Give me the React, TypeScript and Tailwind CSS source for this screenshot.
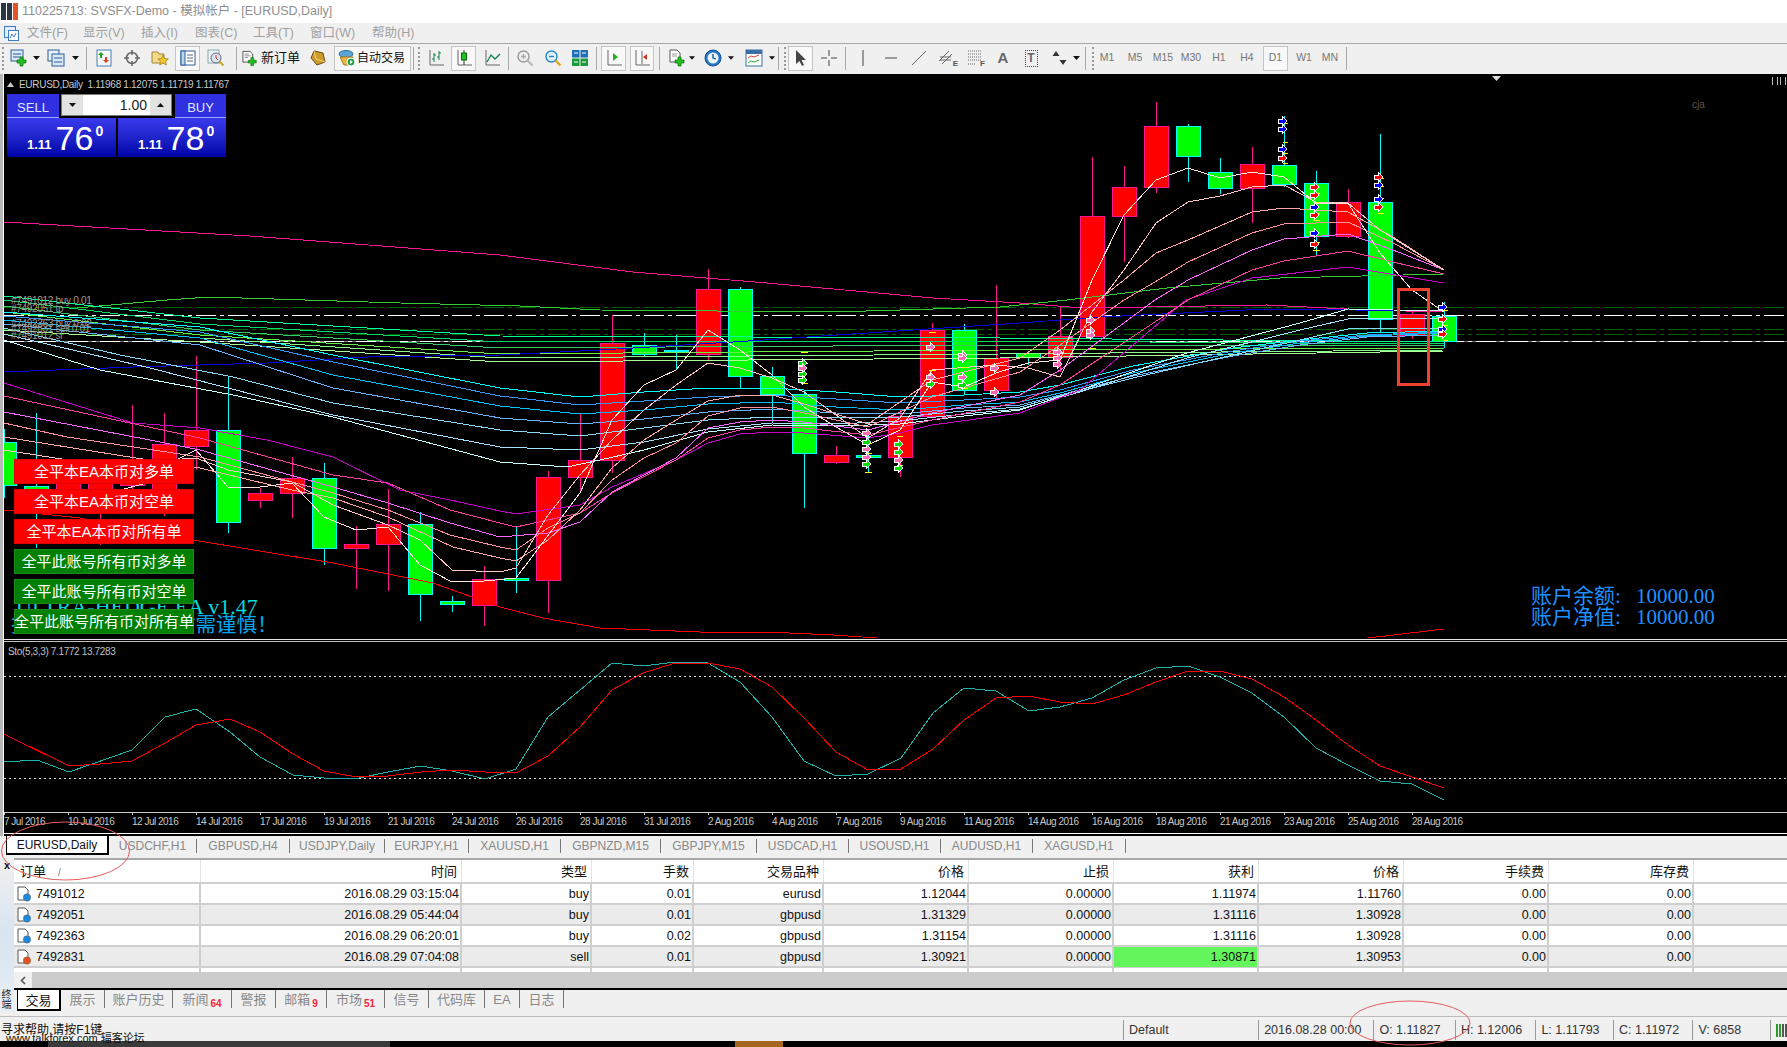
import type { ReactNode } from 'react';

const UI = "font-['Liberation_Sans','Noto_Sans_CJK_SC',sans-serif]";

// x, high, body top, body bottom, low, colour. page coordinates
const candles: [number, number, number, number, number, 'g' | 'r'][] = [
  [4, 429, 442, 485, 498, 'g'], [36, 413, 486, 505, 548, 'g'], [68, 470, 475, 500, 510, 'r'],
  [100, 462, 480, 500, 545, 'r'], [132, 405, 465, 485, 505, 'r'], [164, 413, 444, 512, 516, 'r'],
  [196, 356, 430, 446, 470, 'r'], [228, 377, 430, 522, 533, 'g'], [260, 488, 493, 500, 508, 'r'],
  [292, 457, 478, 493, 518, 'r'], [324, 463, 478, 548, 565, 'g'], [356, 526, 544, 548, 589, 'r'],
  [388, 489, 524, 544, 591, 'r'], [420, 512, 524, 594, 621, 'g'], [452, 596, 601, 604, 612, 'g'],
  [484, 566, 579, 605, 626, 'r'], [516, 527, 578, 580, 593, 'g'], [548, 471, 477, 580, 613, 'r'],
  [580, 413, 460, 477, 491, 'r'], [612, 315, 343, 460, 473, 'r'], [644, 333, 345, 354, 356, 'g'],
  [676, 335, 350, 351, 370, 'g'], [708, 269, 289, 354, 361, 'r'], [740, 287, 289, 376, 388, 'g'],
  [772, 367, 376, 394, 422, 'g'], [804, 390, 394, 453, 508, 'g'], [836, 446, 455, 462, 464, 'r'],
  [868, 430, 455, 457, 473, 'g'], [900, 410, 416, 457, 477, 'r'], [932, 323, 330, 416, 417, 'r'],
  [964, 324, 330, 390, 395, 'g'], [996, 285, 358, 390, 398, 'r'], [1028, 351, 353, 357, 365, 'g'],
  [1060, 307, 336, 357, 372, 'r'], [1092, 157, 216, 336, 338, 'r'], [1124, 166, 187, 216, 262, 'r'],
  [1156, 102, 126, 187, 193, 'r'], [1188, 124, 126, 156, 182, 'g'], [1220, 158, 172, 188, 194, 'g'],
  [1252, 147, 164, 188, 223, 'r'], [1284, 116, 165, 184, 187, 'g'], [1316, 171, 183, 236, 256, 'g'],
  [1348, 189, 202, 236, 238, 'r'], [1380, 134, 202, 319, 333, 'g'], [1412, 310, 314, 335, 339, 'r'],
  [1444, 302, 316, 341, 348, 'g'],
];

const lines: [string, string][] = [
  ['#ff1493', '4,222 250,236 500,255 633,272 767,283 933,298 1020,303 1083,308 1267,305 1367,310 1444,312'],
  ['#ff0000', '4,510 80,518 193,540 333,563 433,583 500,607 543,618 600,628 700,632 767,632 833,635 877,638'],
  ['#ff0000', '1368,638 1444,629'],
  ['#33cc33', '77,308 167,300 210,297 400,303 520,306 600,310 833,312 1000,307 1067,300 1167,288 1280,278 1444,274'],
  ['#00ff99', '4,296 200,318 500,336 1000,338 1444,342'],
  ['#00dd66', '4,300 200,324 500,342 1000,341 1444,344'],
  ['#33cc66', '4,306 200,330 500,348 1000,345 1444,346'],
  ['#66ee44', '4,312 200,335 500,354 1000,350 1444,348'],
  ['#88ff88', '4,320 200,338 500,358 1000,354 1444,350'],
  ['#aaff99', '4,330 200,342 500,362 1000,358 1444,351'],
  ['#0000dd', '4,372 133,367 267,363 367,357 500,355 600,350 733,342 867,333 1020,323 1100,317 1267,309 1444,311'],
  ['#00ffff', '4,312 200,327 333,355 500,388 580,397 644,392 708,388 772,388 836,392 900,397 964,395 1020,392 1060,385 1133,366 1233,348 1300,340 1367,333 1444,331'],
  ['#3399ff', '4,316 200,332 333,362 500,396 580,405 644,401 708,397 772,395 836,399 900,403 964,400 1020,397 1060,390 1133,370 1233,351 1300,341 1367,335 1444,332'],
  ['#00bfff', '4,320 200,338 333,375 500,406 580,414 644,410 708,404 772,402 836,407 900,410 964,405 1020,402 1060,393 1133,373 1233,353 1300,343 1367,336 1444,333'],
  ['#66b3ff', '4,324 200,345 333,388 500,418 580,424 644,419 708,412 772,409 836,413 900,414 964,408 1020,405 1060,395 1133,376 1233,356 1300,345 1367,337 1444,335'],
  ['#88d8f8', '4,328 120,355 233,377 333,403 500,430 580,436 644,428 708,420 772,417 836,418 900,417 964,411 1020,407 1060,396 1133,378 1233,355 1300,340 1348,329 1444,328'],
  ['#a8e0ff', '4,334 150,368 333,415 500,447 580,450 644,442 708,429 772,423 836,424 900,421 964,414 1020,409 1080,392 1187,358 1300,330 1348,319 1444,318'],
  ['#c8ffff', '4,340 100,370 233,395 333,417 500,462 567,467 600,460 644,450 708,432 772,425 836,426 900,424 964,416 1020,410 1080,390 1187,353 1300,323 1348,309 1393,310 1444,311'],
  ['#cc00cc', '4,383 133,423 200,428 267,440 333,457 400,490 450,500 500,511 516,514 580,505 612,487 676,460 708,443 740,434 772,432 804,433 868,438 900,433 932,425 1020,413 1080,390 1186,300 1252,278 1348,267 1444,283'],
  ['#ff3fa0', '4,396 200,438 333,475 388,483 450,510 500,523 516,527 580,513 612,493 676,460 708,438 740,430 772,427 804,428 868,435 932,420 1020,402 1060,385 1188,300 1252,270 1284,261 1348,251 1393,262 1444,274'],
  ['#ff66ff', '4,412 150,440 200,450 333,487 388,503 450,523 500,537 548,533 580,522 612,492 676,458 708,428 740,422 772,420 804,422 868,430 932,413 1020,395 1060,370 1155,300 1188,280 1252,250 1284,239 1348,234 1393,250 1444,270'],
  ['#ff8f9f', '4,423 67,437 200,457 333,493 388,510 450,535 500,547 516,550 548,528 580,513 612,480 644,458 676,443 708,416 740,408 772,407 804,413 868,427 932,397 1020,372 1060,345 1124,300 1155,282 1188,262 1252,233 1284,224 1348,222 1393,243 1444,270'],
  ['#ffa8a8', '4,437 117,455 200,468 292,490 333,498 388,517 453,547 500,558 516,561 548,540 580,510 612,468 644,440 676,420 708,401 740,395 772,395 804,404 868,424 932,380 1020,358 1060,330 1124,280 1156,253 1188,240 1252,212 1284,208 1348,212 1393,237 1444,270'],
  ['#ffc4c4', '4,450 100,465 196,458 228,470 292,482 333,505 388,525 420,540 452,570 500,572 516,568 548,515 580,475 612,440 644,410 676,385 708,363 740,368 772,378 804,392 868,438 900,418 932,370 996,365 1028,368 1060,377 1092,312 1124,270 1156,223 1188,202 1220,196 1252,187 1284,185 1316,202 1348,203 1380,230 1412,250 1444,270'],
  ['#ffe4dc', '120,490 143,484 180,458 196,450 228,487 260,487 292,483 324,517 356,530 388,527 420,565 452,582 484,581 516,578 580,493 612,420 644,385 676,370 708,330 740,350 772,375 804,407 836,427 868,445 900,430 932,382 964,387 996,373 1028,363 1060,360 1092,280 1124,215 1156,180 1188,168 1220,178 1252,172 1284,177 1316,203 1348,203 1380,253 1412,290 1444,312'],
];

const markers: [number, number, string][] = [
  ...[[1282, 121], [1282, 129], [1282, 149], [1314, 207], [1314, 233], [1378, 185], [1378, 199], [1442, 307], [1442, 329]].map(([x, y]): [number, number, string] => [x, y, '#0000ff']),
  ...[[1282, 158], [1314, 187], [1314, 195], [1314, 215], [1314, 244], [1378, 177], [1378, 207], [1442, 319], [1442, 334]].map(([x, y]): [number, number, string] => [x, y, '#ff0000']),
  ...[[802, 363], [802, 374], [802, 380], [866, 442], [866, 464], [898, 444], [898, 452], [898, 468], [930, 384], [962, 385]].map(([x, y]): [number, number, string] => [x, y, '#00dd00']),
  ...[[1090, 320], [1090, 331], [1090, 335], [1057, 352], [1057, 358], [1057, 364], [802, 368], [866, 433], [866, 449], [866, 457], [898, 460], [930, 347], [930, 377], [962, 355], [962, 358], [962, 377], [994, 368], [994, 392]].map(([x, y]): [number, number, string] => [x, y, '#ff69b4']),
];

const ticks: [number, number, number][] = [
  [1283, 1288, 123], [1283, 1288, 142], [1283, 1288, 153], [1283, 1288, 163],
  [1313, 1320, 193], [1313, 1320, 202], [1313, 1320, 213], [1313, 1320, 220], [1313, 1320, 242], [1313, 1320, 250],
  [1378, 1384, 178], [1378, 1384, 186], [1378, 1384, 198], [1378, 1384, 213],
  [1443, 1448, 310], [1443, 1448, 325], [1443, 1448, 340], [1089, 1096, 348],
  [801, 808, 352], [801, 808, 363], [801, 808, 383], [865, 872, 443], [865, 872, 453], [865, 872, 472],
  [897, 903, 436], [897, 903, 452], [897, 903, 465], [929, 936, 332], [929, 936, 370], [929, 936, 377],
  [961, 968, 367], [961, 968, 388],
];

const stoMain = '4,762 37,760 69,772 132,750 165,717 196,709 230,732 260,757 293,775 324,778 359,778 388,772 421,766 452,771 485,779 516,769 548,717 580,690 612,663 643,666 675,662 692,662 708,663 740,682 772,717 804,761 836,776 868,774 901,758 933,713 964,688 996,691 1029,711 1060,707 1092,698 1124,680 1156,668 1188,666 1220,677 1252,693 1284,717 1316,748 1348,765 1380,781 1412,784 1444,800';
const stoSignal = '4,734 69,766 100,764 132,761 165,743 196,725 230,719 260,732 293,754 324,771 356,777 388,776 421,772 452,770 485,772 516,773 548,756 580,727 612,690 643,673 675,663 708,663 740,669 772,687 804,718 836,752 868,770 901,769 933,749 964,720 996,698 1029,696 1060,702 1092,704 1124,695 1156,682 1188,671 1220,671 1252,679 1284,697 1316,720 1348,745 1380,766 1412,777 1444,788';

const dates = ['7 Jul 2016', '10 Jul 2016', '12 Jul 2016', '14 Jul 2016', '17 Jul 2016', '19 Jul 2016', '21 Jul 2016', '24 Jul 2016', '26 Jul 2016', '28 Jul 2016', '31 Jul 2016', '2 Aug 2016', '4 Aug 2016', '7 Aug 2016', '9 Aug 2016', '11 Aug 2016', '14 Aug 2016', '16 Aug 2016', '18 Aug 2016', '21 Aug 2016', '23 Aug 2016', '25 Aug 2016', '28 Aug 2016'];

const chartTabs: [string, string][] = [
  ['USDCHF,H1', 'w-[88px]'], ['GBPUSD,H4', 'w-[93px]'], ['USDJPY,Daily', 'w-[95px]'], ['EURJPY,H1', 'w-[84px]'],
  ['XAUUSD,H1', 'w-[92px]'], ['GBPNZD,M15', 'w-[100px]'], ['GBPJPY,M15', 'w-[96px]'], ['USDCAD,H1', 'w-[92px]'],
  ['USOUSD,H1', 'w-[92px]'], ['AUDUSD,H1', 'w-[92px]'], ['XAGUSD,H1', 'w-[93px]'],
];

const termTabs: [string, string, string?][] = [
  ['展示', 'w-[44px]'], ['账户历史', 'w-[68px]'], ['新闻', 'w-[59px]', '64'], ['警报', 'w-[44px]'], ['邮箱', 'w-[51px]', '9'],
  ['市场', 'w-[58px]', '51'], ['信号', 'w-[44px]'], ['代码库', 'w-[56px]'], ['EA', 'w-[35px]'], ['日志', 'w-[44px]'],
];

const cols = 'grid grid-cols-[187px_261px_130px_102px_130px_145px_145px_145px_145px_145px_145px_1fr]';
const headers = ['时间', '类型', '手数', '交易品种', '价格', '止损', '获利', '价格', '手续费', '库存费'];
const orders = [
  ['7491012', '2016.08.29 03:15:04', 'buy', '0.01', 'eurusd', '1.12044', '0.00000', '1.11974', '1.11760', '0.00', '0.00'],
  ['7492051', '2016.08.29 05:44:04', 'buy', '0.01', 'gbpusd', '1.31329', '0.00000', '1.31116', '1.30928', '0.00', '0.00'],
  ['7492363', '2016.08.29 06:20:01', 'buy', '0.02', 'gbpusd', '1.31154', '0.00000', '1.31116', '1.30928', '0.00', '0.00'],
  ['7492831', '2016.08.29 07:04:08', 'sell', '0.01', 'gbpusd', '1.30921', '0.00000', '1.30871', '1.30953', '0.00', '0.00'],
];

const statusCells: [string, string][] = [
  ['Default', 'w-[136px]'], ['2016.08.28 00:00', 'w-[116px]'], ['O: 1.11827', 'w-[82px]'], ['H: 1.12006', 'w-[81px]'],
  ['L: 1.11793', 'w-[78px]'], ['C: 1.11972', 'w-[80px]'], ['V: 6858', 'w-[78px]'],
];

const closeButtons: [string, string][] = [
  ['全平本EA本币对多单', 'r'], ['全平本EA本币对空单', 'r'], ['全平本EA本币对所有单', 'r'],
  ['全平此账号所有币对多单', 'g'], ['全平此账号所有币对空单', 'g'], ['全平此账号所有币对所有单', 'g'],
];

function Tool({ w, on, children }: { w: string; on?: boolean; children?: ReactNode }) {
  return (
    <div className={`flex h-[25px] shrink-0 items-center justify-center ${w} ${on ? 'border border-[#c4c4c4] bg-[#f8f8f8]' : ''}`}>
      {children}
    </div>
  );
}

const Sep = ({ w }: { w: string }) => (
  <div className={`flex h-[25px] shrink-0 items-center justify-center ${w}`}>
    <div className="h-[23px] w-px bg-[#a8a8a8]" />
  </div>
);

const Grip = () => <div className="ml-[2px] h-[23px] w-[2px] shrink-0 border-l-2 border-dotted border-[#999]" />;

const Drop = () => (
  <svg width="7" height="4" viewBox="0 0 7 4"><path d="M0 0h7L3.5 4z" fill="#111" /></svg>
);

const Ic = ({ children, s = 18 }: { children: ReactNode; s?: number }) => (
  <svg width={s} height={s} viewBox="0 0 18 18">{children}</svg>
);

const Plus = () => <path d="M8 8h3V5h3v3h3v3h-3v3h-3v-3H8z" transform="translate(-1 3)" fill="#22c022" stroke="#0a6a0a" strokeWidth=".7" />;

const AxisBars = ({ c = '#333' }: { c?: string }) => (
  <>
    <path d="M3 1v15h14" fill="none" stroke="#666" />
    <path d="M7 4v9M5 10h2M7 6h2M12 2v9M10 8h2M12 4h2" fill="none" stroke={c} />
  </>
);

function Toolbar() {
  return (
    <div className="flex h-[31px] shrink-0 items-start border-t border-[#a8a8a8] bg-[#f0f0f0] pt-[1px]">
      <div className="flex h-[26px] items-center border-b-0">
        <Grip />
        <div className="w-[3px] shrink-0" />
        <Tool w="w-[23px]"><Ic><rect x="1" y="1" width="12" height="11" fill="#d9e8f6" stroke="#2b5f94" /><path d="M3 5h8M3 8h8" stroke="#2b5f94" /><Plus /></Ic></Tool>
        <Tool w="w-[12px]"><Drop /></Tool>
        <Tool w="w-[28px]"><Ic><rect x="1" y="1" width="11" height="11" fill="#e8f0fa" stroke="#2b5f94" /><rect x="5" y="5" width="12" height="12" fill="#d9e8f6" stroke="#2b5f94" /><path d="M7 9h8M7 13h8" stroke="#2b5f94" /></Ic></Tool>
        <Tool w="w-[11px]"><Drop /></Tool>
        <Sep w="w-[10px]" />
        <Tool w="w-[25px]"><Ic><rect x="2" y="1" width="14" height="16" fill="#f4f8fc" stroke="#4a7fb0" /><path d="M6 3l3 3H7v3H5V6H3z" fill="#1fa51f" /><path d="M11 14l-3-3h2V8h2v3h2z" fill="#e2401a" /></Ic></Tool>
        <Tool w="w-[32px]"><Ic><circle cx="9" cy="9" r="5.5" fill="none" stroke="#666" strokeWidth="1.5" /><path d="M9 1v5M9 12v5M1 9h5M12 9h5" stroke="#666" strokeWidth="1.5" /></Ic></Tool>
        <Tool w="w-[24px]"><Ic><path d="M1 3h6l1 2h5v9H1z" fill="#f3d98a" stroke="#a8873a" /><path d="M12 6l1.7 3.5 3.6.4-2.7 2.5.8 3.6-3.4-1.9-3.3 1.9.7-3.6L7 9.9l3.6-.4z" fill="#f0c52d" stroke="#9a7a14" strokeWidth=".7" /></Ic></Tool>
        <div className="w-[3px] shrink-0" />
        <Tool w="w-[25px]" on><Ic><rect x="2" y="2" width="14" height="14" fill="#fff" stroke="#2b5f94" /><rect x="2" y="2" width="4" height="14" fill="#bcd6ee" stroke="#2b5f94" /><path d="M8 6h6M8 9h6M8 12h6" stroke="#567" /></Ic></Tool>
        <Tool w="w-[32px]"><Ic><rect x="1" y="1" width="11" height="13" fill="#eef3f8" stroke="#8aa" /><circle cx="9" cy="9" r="5" fill="#d8e4ee" stroke="#667" /><path d="M9 6v3l2 2" stroke="#c33" fill="none" /><path d="M12.5 12.5l4 4" stroke="#c9a227" strokeWidth="2" /></Ic></Tool>
        <Sep w="w-[8px]" />
        <div className="flex h-[25px] w-[60px] shrink-0 items-center gap-[3px] pl-[2px]">
          <Ic s={17}><path d="M1 1h8l3 3v9H1z" fill="#fff" stroke="#444" /><path d="M3 4h5M3 6h7M3 8h4" stroke="#888" /><Plus /></Ic>
          <span className="text-[13px] whitespace-nowrap text-[#111]">新订单</span>
        </div>
        <div className="w-[5px] shrink-0" />
        <Tool w="w-[26px]"><Ic><path d="M5 2l9 2 2 9-8 3-6-7z" fill="#cf9a2c" stroke="#6b4a10" /><path d="M5 2l2 8 9 3" fill="none" stroke="#f0d37a" /></Ic></Tool>
        <div className="w-[3px] shrink-0" />
        <div className="flex h-[25px] w-[77px] shrink-0 items-center gap-[1px] border border-[#c4c4c4] bg-[#f8f8f8] pl-[3px]">
          <Ic><ellipse cx="8" cy="5" rx="7" ry="3.5" fill="#5ba4d6" stroke="#2b6f9e" /><path d="M2 8l4 8h6l3-8z" fill="#e9b84a" stroke="#a07a20" /><circle cx="13" cy="13" r="4" fill="#16a34a" stroke="#fff" /><path d="M12 11l3 2-3 2z" fill="#fff" /></Ic>
          <span className="text-[12px] whitespace-nowrap text-[#111]">自动交易</span>
        </div>
        <Sep w="w-[5px]" />
        <Grip />
        <div className="w-[3px] shrink-0" />
        <Tool w="w-[26px]"><Ic><AxisBars c="#14804a" /></Ic></Tool>
        <div className="w-[2px] shrink-0" />
        <Tool w="w-[25px]" on><Ic><path d="M3 1v15h14" fill="none" stroke="#666" /><path d="M9 1v15" stroke="#333" /><rect x="6.5" y="4" width="5" height="7" fill="#22c022" stroke="#0a6a0a" /></Ic></Tool>
        <Tool w="w-[31px]"><Ic><path d="M3 1v15h14" fill="none" stroke="#666" /><path d="M4 13l4-7 4 4 5-5" fill="none" stroke="#14804a" strokeWidth="1.3" /></Ic></Tool>
        <Sep w="w-[3px]" />
        <Tool w="w-[29px]"><Ic><circle cx="7.5" cy="7.5" r="5.5" fill="#eee" stroke="#999" strokeWidth="1.4" /><path d="M5 7.5h5M7.5 5v5" stroke="#aaa" strokeWidth="1.4" /><path d="M11.5 11.5l5 5" stroke="#bbb" strokeWidth="2.4" /></Ic></Tool>
        <Tool w="w-[27px]"><Ic><circle cx="7.5" cy="7.5" r="5.5" fill="#dff1fb" stroke="#2a86c4" strokeWidth="1.4" /><path d="M5 7.5h5" stroke="#2a86c4" strokeWidth="1.4" /><path d="M11.5 11.5l5 5" stroke="#d9a81f" strokeWidth="2.4" /></Ic></Tool>
        <Tool w="w-[27px]"><Ic><rect x="1" y="1" width="7.5" height="7.5" fill="#1d6fb8" /><rect x="9.5" y="1" width="7.5" height="7.5" fill="#1d6fb8" /><rect x="1" y="9.5" width="7.5" height="7.5" fill="#1c9c3a" /><rect x="9.5" y="9.5" width="7.5" height="7.5" fill="#1c9c3a" /><path d="M3 4h4M11 4h4M3 13h4M11 13h4" stroke="#fff" /></Ic></Tool>
        <Sep w="w-[6px]" />
        <div className="w-[2px] shrink-0" />
        <Tool w="w-[25px]" on><Ic><path d="M3 1v15h14" fill="none" stroke="#666" /><path d="M8 4l5 4-5 4z" fill="#22b022" /></Ic></Tool>
        <div className="w-[4px] shrink-0" />
        <Tool w="w-[24px]" on><Ic><path d="M3 1v15h14M9 2v13" fill="none" stroke="#666" /><path d="M10 8l4-3v6z" fill="#c8381a" /></Ic></Tool>
        <Sep w="w-[10px]" />
        <Tool w="w-[25px]"><Ic><path d="M2 1h7l3 3v9H2z" fill="#fff" stroke="#555" /><path d="M4 5h5M4 7h5" stroke="#999" /><Plus /></Ic></Tool>
        <Tool w="w-[6px]"><Drop /></Tool>
        <div className="w-[3px] shrink-0" />
        <Tool w="w-[30px]"><Ic><circle cx="9" cy="9" r="8" fill="#2478c8" stroke="#134f8c" /><circle cx="9" cy="9" r="5.5" fill="#eaf4fb" /><path d="M9 5v4l3 1" fill="none" stroke="#134f8c" strokeWidth="1.3" /></Ic></Tool>
        <Tool w="w-[6px]"><Drop /></Tool>
        <div className="w-[7px] shrink-0" />
        <Tool w="w-[25px]"><Ic><rect x="1" y="1" width="16" height="16" fill="#fff" stroke="#3a6ea5" /><rect x="1" y="1" width="16" height="4" fill="#3a6ea5" /><path d="M3 9l3-2 3 1 5-2" fill="none" stroke="#c43" /><path d="M3 14l3-2 3 1 5-2" fill="none" stroke="#2a2" /></Ic></Tool>
        <div className="w-[3px] shrink-0" />
        <Tool w="w-[6px]"><Drop /></Tool>
        <Sep w="w-[7px]" />
        <Grip />
        <div className="w-[2px] shrink-0" />
        <Tool w="w-[25px]" on><Ic><path d="M4 1v14l3.5-3 2.5 5 2-1-2.5-5H14z" fill="#444" /></Ic></Tool>
        <Tool w="w-[31px]"><Ic><path d="M9 1v6M9 11v6M1 9h6M11 9h6" stroke="#444" /></Ic></Tool>
        <Sep w="w-[3px]" />
        <Tool w="w-[31px]"><Ic><path d="M9 1v16" stroke="#444" /></Ic></Tool>
        <Tool w="w-[26px]"><Ic><path d="M3 9h12" stroke="#444" /></Ic></Tool>
        <Tool w="w-[29px]"><Ic><path d="M2 16L16 2" stroke="#666" /></Ic></Tool>
        <Tool w="w-[28px]"><div className="relative"><Ic><path d="M1 12L11 2M4 15L14 5M2 8h11M2 11h11" stroke="#666" fill="none" /></Ic><span className="absolute right-[-2px] bottom-[-3px] text-[8px] font-bold text-[#555]">E</span></div></Tool>
        <Tool w="w-[28px]"><div className="relative"><Ic><path d="M2 2h13M2 5h13M2 8h13M2 11h13" stroke="#666" strokeDasharray="1 1" /><path d="M2 15h7" stroke="#666" strokeDasharray="1 1" /></Ic><span className="absolute right-[-1px] bottom-[-3px] text-[8px] font-bold text-[#555]">F</span></div></Tool>
        <Tool w="w-[28px]"><span className="text-[15px] font-bold text-[#666]">A</span></Tool>
        <Tool w="w-[28px]"><div className="flex h-[17px] w-[13px] items-center justify-center border border-dotted border-[#444] text-[12px] font-bold text-[#666]">T</div></Tool>
        <Tool w="w-[27px]"><Ic><path d="M6 2l3.5 5h-7zM13 16l-3.5-5h7z" fill="#333" /></Ic></Tool>
        <Tool w="w-[8px]"><Drop /></Tool>
        <Sep w="w-[10px]" />
        <Grip />
        <div className="w-[1px] shrink-0" />
        {[['M1', 'w-[24px]'], ['M5', 'w-[32px]'], ['M15', 'w-[24px]'], ['M30', 'w-[32px]'], ['H1', 'w-[24px]'], ['H4', 'w-[32px]']].map(([t, w]) => (
          <Tool key={t} w={w}><span className="text-[10.5px] text-[#777]">{t}</span></Tool>
        ))}
        <Tool w="w-[25px]" on><span className="text-[10.5px] text-[#777]">D1</span></Tool>
        <Tool w="w-[32px]"><span className="text-[10.5px] text-[#777]">W1</span></Tool>
        <Tool w="w-[20px]"><span className="text-[10.5px] text-[#777]">MN</span></Tool>
        <Sep w="w-[12px]" />
      </div>
    </div>
  );
}

function PricePanel({ w, big }: { w: string; big: string }) {
  return (
    <div className={`flex h-[39px] items-start bg-linear-to-b from-[#3a3aee] to-[#0000a8] pl-[20px] text-white ${w}`}>
      <span className="mt-[17px] text-[13px] font-bold">1.11</span>
      <span className="ml-[4px] text-[34px] leading-[40px]">{big}</span>
      <span className="mt-[3px] ml-[2px] text-[14px] font-bold">0</span>
    </div>
  );
}

function TradePanel() {
  return (
    <div className="absolute top-[20px] left-[3px] w-[220px]">
      <div className="flex h-[24px] items-start gap-[2px]">
        <div className="flex h-[24px] w-[52px] justify-center border-b border-[#9aa8f8] bg-[#3030e0] pt-[4px] text-[13px] text-[#dfe6ff]">SELL</div>
        <div className="flex h-[22px] w-[111px] items-center border border-[#777] bg-[#d8d8d8]">
          <div className="flex h-full w-[21px] items-center justify-center bg-[#e2e2e2]"><Drop /></div>
          <div className="flex h-full flex-1 items-center justify-end bg-white pr-[3px] text-[14px] text-[#222]">1.00</div>
          <div className="flex h-full w-[21px] items-center justify-center bg-[#e2e2e2]"><div className="rotate-180"><Drop /></div></div>
        </div>
        <div className="ml-[1px] flex h-[24px] w-[51px] justify-center border-b border-[#9aa8f8] bg-[#3030e0] pt-[4px] text-[13px] text-[#dfe6ff]">BUY</div>
      </div>
      <div className="flex gap-[2px]">
        <PricePanel w="w-[109px]" big="76" />
        <PricePanel w="w-[108px]" big="78" />
      </div>
    </div>
  );
}

function MainChart() {
  return (
    <div className="relative h-[565px] overflow-hidden bg-black">
      <svg width="1783" height="565" viewBox="4 74 1783 565" shapeRendering="crispEdges" className="block">
        {[307, 329, 334].map((y) => (
          <line key={y} x1="4" x2="1787" y1={y} y2={y} stroke="#006400" strokeDasharray="20 4 4 4" />
        ))}
        <line x1="4" x2="1787" y1="341" y2="341" stroke="#777" />
        {[315, 341].map((y) => (
          <line key={y} x1="4" x2="1787" y1={y} y2={y} stroke="#fff" strokeDasharray="20 4 4 4" />
        ))}
        {candles.map(([x, hi, top, bot, lo, c]) => (
          <g key={x}>
            <line x1={x} x2={x} y1={hi} y2={lo} stroke={c === 'g' ? '#00ffff' : '#ff1493'} />
            <rect x={x - 12} y={top} width="24" height={bot - top} fill={c === 'g' ? '#00ff00' : '#ff0000'} stroke={c === 'g' ? '#00ffff' : '#ff1493'} />
          </g>
        ))}
        {lines.map(([c, pts], i) => (
          <polyline key={i} points={pts} fill="none" stroke={c} />
        ))}
        {ticks.map(([a, b, y], i) => (
          <line key={i} x1={a} x2={b} y1={y} y2={y} stroke="#ffff00" />
        ))}
        {markers.map(([x, y, c], i) => (
          <polygon key={i} points={`${x - 4},${y - 2} ${x},${y - 2} ${x},${y - 5} ${x + 5},${y} ${x},${y + 5} ${x},${y + 2} ${x - 4},${y + 2}`} fill={c} stroke="#fff" />
        ))}
        <rect x="1398" y="289" width="30" height="95" fill="none" stroke="#f0402e" strokeWidth="3" />
        <g className={`${UI} text-[10px] tracking-[-0.3px]`} fill="#a39a8c" shapeRendering="auto">
          <text x="11" y="304">#7491012 buy 0.01</text>
          <text x="11" y="312">#7492051 tp</text>
          <text x="11" y="327">#7492363 buy 0.02</text>
          <text x="11" y="332">#7492831 sell 0.01</text>
          <text x="11" y="339">#7491012 sl</text>
        </g>
      </svg>

      <div className="absolute top-[3px] left-[3px] flex items-center gap-[5px] text-[10px] tracking-[-0.3px] text-[#c8c8c8]">
        <svg width="7" height="5" viewBox="0 0 7 5"><path d="M0 5L3.5 0 7 5z" fill="#ccc" /></svg>
        <span className="whitespace-pre">EURUSD,Daily  1.11968 1.12075 1.11719 1.11767</span>
      </div>
      <svg width="9" height="5" viewBox="0 0 9 5" className="absolute top-[2px] left-[1488px]"><path d="M0 0h9L4.5 5z" fill="#ddd" /></svg>
      <div className="absolute top-[3px] right-[1px] flex gap-[2px]">
        <div className="h-[8px] w-[6px] border-x border-[#bbb]" />
        <div className="h-[8px] w-[6px] border-x border-[#bbb]" />
      </div>
      <div className="absolute top-[23px] left-[1688px] text-[10px] text-[#555]">cja</div>

      <TradePanel />

      <div className="absolute top-[522px] left-[12px] font-['Liberation_Serif','Noto_Sans_CJK_SC',serif] text-[22px] leading-[22px] whitespace-nowrap text-[#00dcdc]">ULTRA-HEDGE EA v1.47</div>
      <div className="absolute top-[539px] left-[7px] font-['Liberation_Serif','Noto_Sans_CJK_SC',serif] text-[20.5px] leading-[24px] whitespace-nowrap text-[#00a8f0]">投资有风险，入市时需谨慎！</div>

      <div className="absolute top-[385px] left-[10px] flex w-[180px] flex-col gap-[5px]">
        {closeButtons.map(([t, c]) => (
          <div
            key={t}
            className={`flex h-[25px] items-center justify-center border pt-[1px] text-[15px] whitespace-nowrap text-white ${c === 'r' ? 'border-[#e00000] bg-[#ff0000]' : 'border-[#1d8a1d] bg-[#008000]'}`}
          >
            {t}
          </div>
        ))}
      </div>

      <div className="absolute top-[512px] left-[1527px] font-['Liberation_Serif','Noto_Sans_CJK_SC',serif] text-[21px] leading-[21px] whitespace-nowrap text-[#1e90ff] [word-spacing:10px]">
        <div>账户余额: 10000.00</div>
        <div>账户净值: 10000.00</div>
      </div>
    </div>
  );
}

function SubChart() {
  return (
    <div className="relative h-[170px] bg-black">
      <svg width="1783" height="170" viewBox="4 642 1783 170" shapeRendering="crispEdges" className="block">
        {[676, 778].map((y) => (
          <line key={y} x1="4" x2="1787" y1={y} y2={y} stroke="#ddd" strokeDasharray="2 3" />
        ))}
        <polyline points={stoMain} fill="none" stroke="#20b2aa" />
        <polyline points={stoSignal} fill="none" stroke="#ff0000" />
      </svg>
      <div className="absolute top-[2px] left-[4px] text-[10px] tracking-[-0.35px] text-[#c0c0c0]">Sto(5,3,3) 7.1772 13.7283</div>
    </div>
  );
}

function ChartPane() {
  return (
    <div className="shrink-0 bg-[#b8b8b8] pl-[3px]">
      <div className="border-l border-white bg-black">
        <MainChart />
        <div className="h-px bg-[#e8e8e8]" />
        <div className="h-px bg-black" />
        <div className="h-px bg-[#c0c0c0]" />
        <SubChart />
        <div className="flex h-[21px] overflow-hidden border-t border-[#c8c8c8] bg-black">
          {dates.map((d) => (
            <div key={d} className="w-[64px] shrink-0">
              <div className="h-[2px] w-px bg-[#c8c8c8]" />
              <div className="text-[10px] leading-[13px] tracking-[-0.5px] whitespace-nowrap text-[#c8c8c8]">{d}</div>
            </div>
          ))}
        </div>
        <div className="h-px bg-white" />
        <div className="h-[2px] bg-black" />
      </div>
    </div>
  );
}

function OrderIcon({ c }: { c: string }) {
  return (
    <svg width="15" height="16" viewBox="0 0 15 16" className="shrink-0">
      <path d="M1 1h7l3 3v10H1z" fill="#fff" stroke="#555" />
      <circle cx="10" cy="11.5" r="3.7" fill={c} stroke="#666" strokeWidth=".5" />
    </svg>
  );
}

function Terminal() {
  return (
    <div className="flex h-[154px] shrink-0">
      <div className="flex w-[14px] shrink-0 flex-col items-center bg-linear-to-b from-[#f0f0f0] via-[#d8e4f0] to-[#e8eef5]">
        <span className="mt-[1px] text-[11px] leading-[12px] font-bold text-[#111]">x</span>
        <div className="mt-auto mb-[2px] w-[11px] text-[10px] leading-[10px] text-[#222]">终端</div>
      </div>
      <div className="flex min-w-0 flex-1 flex-col">
        <div className={`${cols} h-[26px] shrink-0 border-y-2 border-t-[#a8a8a8] border-b-[#d0d0d0] bg-white`}>
          <div className="flex items-center border-r border-[#e4e4e4] pt-[2px] pl-[6px] text-[13px] text-[#111]">
            订单<span className="ml-[12px] text-[10px] text-[#777]">/</span>
          </div>
          {headers.map((h, i) => (
            <div key={i} className="flex items-center justify-end border-r border-[#e4e4e4] pt-[2px] pr-[4px] text-[13px] text-[#111]">{h}</div>
          ))}
          <div />
        </div>
        {orders.map((r, i) => (
          <div key={r[0]} className={`${cols} h-[21px] shrink-0 border-b-2 border-[#cfcfcf] ${i % 2 ? 'bg-[#ebebeb]' : 'bg-white'}`}>
            <div className="flex items-center gap-[4px] border-r-2 border-[#cfcfcf] pt-[1px] pl-[3px] text-[12.5px] text-[#111]">
              <OrderIcon c={r[2] === 'buy' ? '#1d88e0' : '#e8501c'} />
              {r[0]}
            </div>
            {r.slice(1).map((v, j) => (
              <div
                key={j}
                className={`flex items-center justify-end border-r-2 border-[#cfcfcf] pt-[1px] pr-[1px] text-[12.5px] whitespace-nowrap text-[#111] ${v === '1.30871' ? 'bg-[#63f55c]' : ''}`}
              >
                {v}
              </div>
            ))}
            <div />
          </div>
        ))}
        <div className={`${cols} h-[4px] shrink-0 bg-white`}>
          {Array.from({ length: 11 }).map((_, i) => (
            <div key={i} className="border-r-2 border-[#cfcfcf]" />
          ))}
        </div>
        <div className="flex h-[16px] shrink-0 items-center bg-[#cbcbcb]">
          <div className="flex h-full w-[18px] items-center justify-center bg-[#f0f0f0]">
            <svg width="6" height="9" viewBox="0 0 6 9"><path d="M5 1L1.5 4.5 5 8" fill="none" stroke="#555" strokeWidth="1.6" /></svg>
          </div>
        </div>
        <div className="h-[2px] shrink-0 bg-black" />
        <div className="flex h-[21px] shrink-0 items-start bg-[#f0f0f0] pl-[3px]">
          <div className="flex h-[21px] w-[44px] items-center justify-center border-r-2 border-b-2 border-l border-black bg-white pt-[2px] text-[13px] text-[#111]">交易</div>
          {termTabs.map(([t, w, n]) => (
            <div key={t} className={`flex h-[18px] items-center justify-center border-r border-[#777] pt-[2px] text-[13px] whitespace-nowrap text-[#888] ${w}`}>
              {t}
              {n && <span className="mt-[7px] ml-[2px] text-[10px] font-bold text-[#f0283c]">{n}</span>}
            </div>
          ))}
        </div>
      </div>
    </div>
  );
}

export default function App() {
  return (
    <div className={`relative h-[1047px] w-[1787px] overflow-hidden bg-[#f0f0f0] ${UI}`}>
      <div className="flex h-[23px] items-center bg-white">
        <div className="ml-[1px] flex gap-[1px]">
          <div className="h-[17px] w-[5px] bg-[#2d3744]" />
          <div className="h-[17px] w-[5px] bg-[#2d3744]" />
          <div className="h-[17px] w-[5px] bg-[#e2552a]" />
        </div>
        <span className="ml-[4px] text-[12.5px] whitespace-nowrap text-[#8e8e8e]">110225713: SVSFX-Demo - 模拟帐户 - [EURUSD,Daily]</span>
      </div>

      <div className="flex h-[20px] items-center text-[12.5px] text-[#a0a0a0]">
        <div className="w-[27px] pl-[4px]">
          <svg width="15" height="15" viewBox="0 0 15 15"><rect x=".5" y=".5" width="11" height="11" fill="#e4eefa" stroke="#3a7cc4" /><rect x="4.5" y="4.5" width="10" height="10" fill="#fff" stroke="#3a7cc4" /><path d="M6 12l2-4 2 3 2-4" fill="none" stroke="#3a7cc4" /></svg>
        </div>
        <span className="w-[56px]">文件(F)</span>
        <span className="w-[58px]">显示(V)</span>
        <span className="w-[54px]">插入(I)</span>
        <span className="w-[58px]">图表(C)</span>
        <span className="w-[57px]">工具(T)</span>
        <span className="w-[62px]">窗口(W)</span>
        <span>帮助(H)</span>
      </div>

      <Toolbar />
      <ChartPane />

      <div className="flex h-[22px] shrink-0 items-start bg-[#f0f0f0]">
        <div className="ml-[6px] flex h-[19px] w-[103px] items-center justify-center border-r-2 border-b-2 border-l border-black bg-white pt-[1px] text-[12px] text-[#111]">EURUSD,Daily</div>
        {chartTabs.map(([t, w]) => (
          <div key={t} className={`mt-[3px] flex h-[14px] items-center justify-center border-r border-[#777] text-[12px] whitespace-nowrap text-[#888] ${w}`}>{t}</div>
        ))}
      </div>

      <Terminal />

      <div className="h-[5px] border-b border-[#bdbdbd]" />
      <div className="flex h-[24px] items-center pt-[2px] text-[12.5px] whitespace-nowrap text-[#333]">
        <div className="w-[1123px] shrink-0 pl-[1px] text-[12px] text-[#111]">寻求帮助,请按F1键</div>
        {statusCells.map(([t, w]) => (
          <div key={t} className={`flex h-[20px] items-center border-l border-[#999] pl-[5px] ${w}`}>{t}</div>
        ))}
        <div className="flex h-[20px] items-center gap-[1px] border-l border-[#999] pl-[5px]">
          <div className="h-[13px] w-[2px] bg-[#2a9a2a]" />
          <div className="h-[13px] w-[2px] bg-[#2a9a2a]" />
          <div className="h-[13px] w-[2px] bg-[#555]" />
          <div className="h-[13px] w-[2px] bg-[#555]" />
        </div>
      </div>
      <div className="flex h-[7px] bg-black">
        <div className="w-[48px]" />
        <div className="w-[342px] bg-[#3a3a3a]" />
        <div className="w-[345px]" />
        <div className="w-[48px] bg-[#a8651f]" />
      </div>

      <div className="absolute top-[1032px] left-[6px] text-[11px] leading-[13px] whitespace-nowrap text-[#111]">www.talkforex.com 辐客论坛</div>

      <svg width="1787" height="1047" viewBox="0 0 1787 1047" className="pointer-events-none absolute top-0 left-0">
        <ellipse cx="65.5" cy="851" rx="64" ry="29" fill="none" stroke="#e65c5c" />
        <ellipse cx="1410" cy="1023" rx="60" ry="22" fill="none" stroke="#e65c5c" />
      </svg>
    </div>
  );
}
